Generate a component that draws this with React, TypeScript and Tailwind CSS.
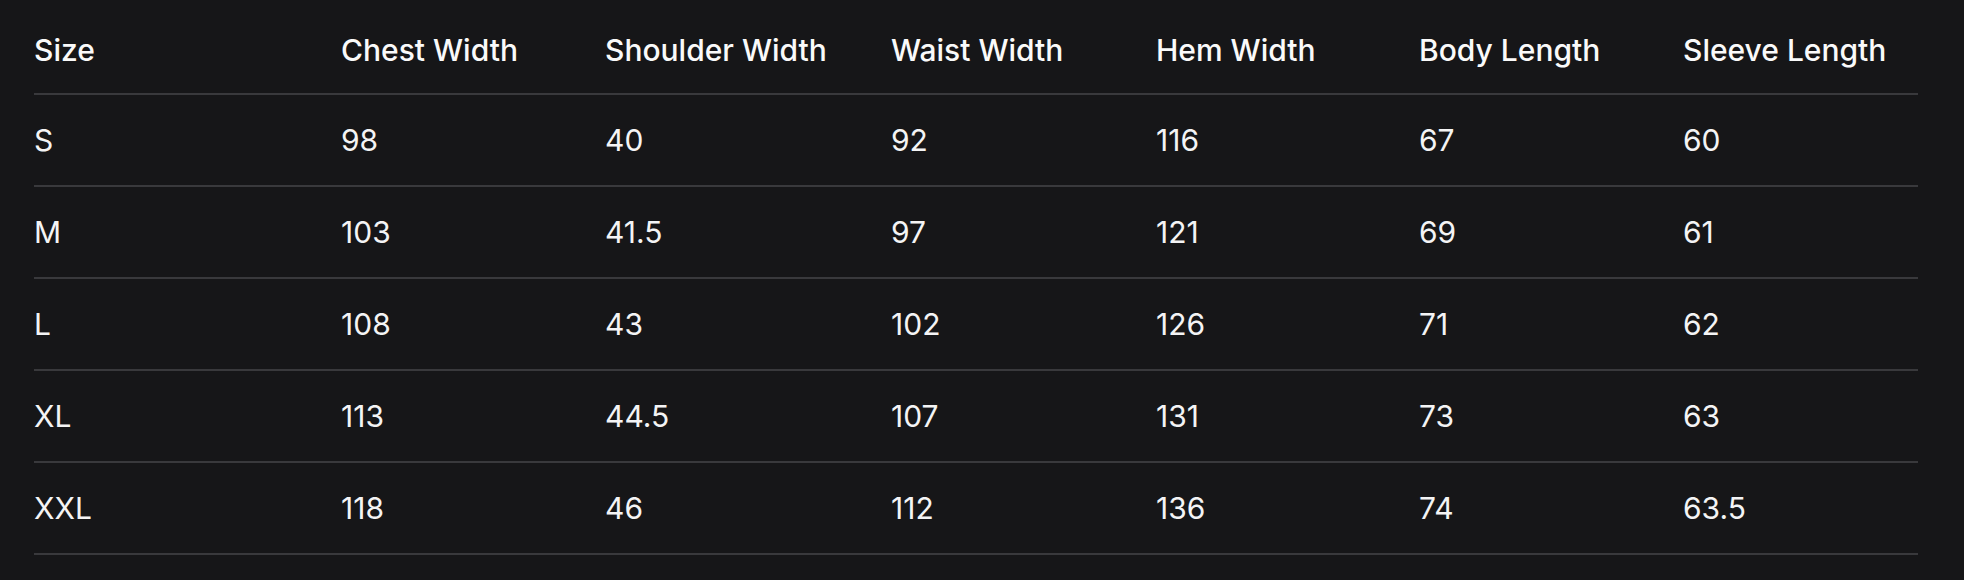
import React from "react";

const headers = [
  "Size",
  "Chest Width",
  "Shoulder Width",
  "Waist Width",
  "Hem Width",
  "Body Length",
  "Sleeve Length",
];

const rows = [
  ["S", "98", "40", "92", "116", "67", "60"],
  ["M", "103", "41.5", "97", "121", "69", "61"],
  ["L", "108", "43", "102", "126", "71", "62"],
  ["XL", "113", "44.5", "107", "131", "73", "63"],
  ["XXL", "118", "46", "112", "136", "74", "63.5"],
];

// column widths measured off the reference
const widths = ["w-[307px]", "w-[264px]", "w-[286px]", "w-[265px]", "w-[263px]", "w-[264px]", "w-[235px]"];

export default function App() {
  return (
    <div className="min-h-screen bg-[#161618] pl-[34px] font-['Inter',sans-serif]">
      <table className="w-[1884px] table-fixed border-collapse text-left text-[30px] leading-[36px]">
        <colgroup>
          {widths.map((w, i) => (
            <col key={i} className={w} />
          ))}
        </colgroup>
        <thead>
          <tr className="border-b-2 border-[#39393c]">
            {headers.map((h) => (
              <th key={h} className="h-[94px] pt-[6px] align-middle font-medium text-[#fafafa]">
                {h}
              </th>
            ))}
          </tr>
        </thead>
        <tbody>
          {rows.map((r) => (
            <tr key={r[0]} className="border-b-2 border-[#39393c]">
              {r.map((c, i) => (
                <td key={i} className="h-[92px] align-middle font-normal text-[#f4f4f5]">
                  {c}
                </td>
              ))}
            </tr>
          ))}
        </tbody>
      </table>
    </div>
  );
}
